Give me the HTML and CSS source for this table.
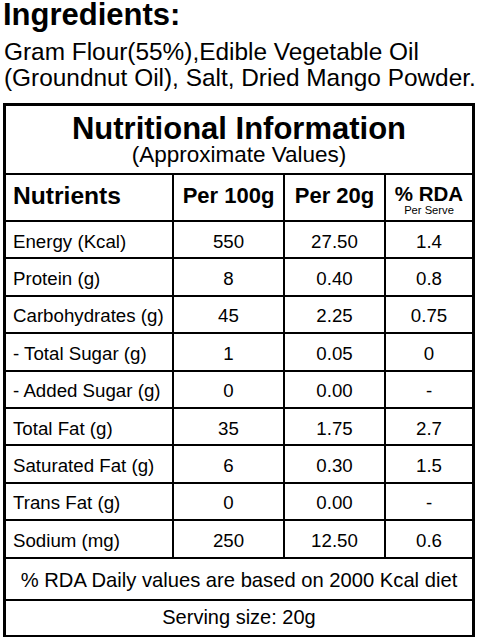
FILE: index.html
```html
<!DOCTYPE html>
<html lang="en">
<head>
  <meta charset="UTF-8" />
  <meta name="viewport" content="width=device-width, initial-scale=1.0"/>
  <title>Nutritional Information</title>
  <link rel="stylesheet" href="styles.css">
</head>
<body>
  <section class="ingredientes">
    <h1>Ingredients:</h1>
    <p>Gram Flour(55%),Edible Vegetable Oil<br>(Groundnut Oil), Salt, Dried Mango Powder.</p>
  </section>

  <div class="caixa">
    <div class="titulo">
      <h2>Nutritional Information</h2>
      <p>(Approximate Values)</p>
    </div>

    <table class="tabela">
      <colgroup>
        <col class="c1"><col class="c2"><col class="c3"><col class="c4">
      </colgroup>
      <tr class="cab">
        <th class="nome">Nutrients</th>
        <th>Per 100g</th>
        <th>Per 20g</th>
        <th class="rda">% RDA<span>Per Serve</span></th>
      </tr>
      <tr><td>Energy (Kcal)</td><td>550</td><td>27.50</td><td>1.4</td></tr>
      <tr><td>Protein (g)</td><td>8</td><td>0.40</td><td>0.8</td></tr>
      <tr><td>Carbohydrates (g)</td><td>45</td><td>2.25</td><td>0.75</td></tr>
      <tr><td>- Total Sugar (g)</td><td>1</td><td>0.05</td><td>0</td></tr>
      <tr><td>- Added Sugar (g)</td><td>0</td><td>0.00</td><td>-</td></tr>
      <tr><td>Total Fat (g)</td><td>35</td><td>1.75</td><td>2.7</td></tr>
      <tr><td>Saturated Fat (g)</td><td>6</td><td>0.30</td><td>1.5</td></tr>
      <tr><td>Trans Fat (g)</td><td>0</td><td>0.00</td><td>-</td></tr>
      <tr><td>Sodium (mg)</td><td>250</td><td>12.50</td><td>0.6</td></tr>
      <tr class="nota"><td colspan="4">% RDA Daily values are based on 2000 Kcal diet</td></tr>
      <tr class="porcao"><td colspan="4">Serving size: 20g</td></tr>
    </table>
  </div>
</body>
</html>
```

FILE: styles.css
```css
:root {
  --preto: #000;
  --branco: #fff;
}
body {
  margin: 0;
  background: var(--branco);
  color: var(--preto);
  font-family: "Liberation Sans", Arial, sans-serif;
}
.ingredientes {
  padding-left: 3px;
}
.ingredientes h1 {
  margin: 0;
  font-size: 31px;
  line-height: 29px;
  font-weight: bold;
}
.ingredientes p {
  margin: 10px 0 0;
  padding-left: 1px;
  font-size: 24.4px;
  line-height: 26px;
  white-space: nowrap;
}
.caixa {
  box-sizing: border-box;
  width: 472px;
  margin: 12px 0 0 3px;
  border: 3px solid var(--preto);
}
.titulo {
  height: 69px;
  box-sizing: border-box;
  padding-top: 8px;
  border-bottom: 2px solid var(--preto);
  text-align: center;
}
.titulo h2 {
  margin: 0;
  font-size: 31px;
  line-height: 29px;
}
.titulo p {
  margin: 0;
  font-size: 22.5px;
  line-height: 23px;
}
.tabela {
  width: 100%;
  border-collapse: collapse;
  border-style: hidden;
  table-layout: fixed;
}
.c1 { width: 167px; }
.c2 { width: 111px; }
.c3 { width: 101px; }
.c4 { width: 87px; }
.tabela th,
.tabela td {
  border: 2px solid var(--preto);
  padding: 0;
  text-align: center;
  vertical-align: middle;
}
.tabela td {
  height: 31.4px;
  font-size: 18.7px;
  padding-top: 4px;
}
.tabela td:first-child {
  text-align: left;
  padding-left: 7px;
}
.cab th {
  height: 41px;
  font-size: 22px;
  padding-bottom: 4px;
}
.cab th.nome {
  text-align: left;
  padding-left: 7px;
  font-size: 24.6px;
}
.cab th.rda {
  height: 41px;
  font-size: 20.5px;
  line-height: 20px;
  padding: 4px 0 0;
}
.cab th.rda span {
  display: block;
  font-size: 11.2px;
  line-height: 12px;
  font-weight: normal;
}
.tabela tr.nota td {
  height: 37px;
  text-align: center;
  padding: 3px 0 0;
  font-size: 20.2px;
}
.tabela tr.porcao td {
  height: 34px;
  text-align: center;
  padding: 0;
  font-size: 20px;
}
```
